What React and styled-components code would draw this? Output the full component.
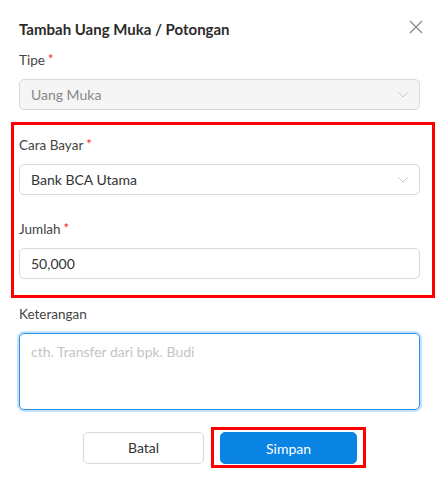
import React from "react";
import styled, { createGlobalStyle } from "styled-components";

const Global = createGlobalStyle`
  html, body { margin: 0; padding: 0; background: #fff; }
  body { font-family: "Lato", "Noto Sans", sans-serif; color: #333; }
  * { box-sizing: border-box; }
`;

const Modal = styled.div`
  position: relative;
  width: 444px;
  padding: 18px 24px 12px 19px;
`;

const Header = styled.div`
  display: flex;
  align-items: center;
  justify-content: space-between;
  height: 22px;
  margin-bottom: 10px;
`;

const Title = styled.h2`
  margin: 0;
  font-size: 15px;
  font-weight: 700;
  line-height: 22px;
  color: #2b2b2b;
`;

const Close = styled.button`
  border: 0;
  background: none;
  padding: 0;
  margin-right: -3px;
  margin-top: -4px;
  width: 14px;
  height: 14px;
  display: flex;
  cursor: pointer;
`;

const Field = styled.div`
  margin-bottom: ${(p) => p.$mb ?? 24}px;
`;

const Label = styled.div`
  height: 20px;
  font-size: 13.5px;
  line-height: 20px;
  color: #444;
  margin-bottom: 9px;
`;

const Req = styled.span`
  color: #f5222d;
  margin-left: 3px;
  font-size: 13px;
  line-height: 0;
  vertical-align: 1px;
`;

const SelectBox = styled.div`
  height: 31px;
  border: 1px solid #d9d9d9;
  border-radius: 5px;
  background: ${(p) => (p.$disabled ? "#f5f5f5" : "#fff")};
  color: ${(p) => (p.$disabled ? "#888" : "#333")};
  display: flex;
  align-items: center;
  justify-content: space-between;
  padding: 0 11px 0 11px;
  font-size: 14px;
`;

const Input = styled.div`
  height: 31px;
  border: 1px solid #d9d9d9;
  border-radius: 5px;
  display: flex;
  align-items: center;
  padding: 0 11px;
  font-size: 14px;
  color: #333;
`;

const TextArea = styled.div`
  height: 77px;
  border: 1px solid #2a8ee3;
  border-radius: 5px;
  box-shadow: 0 0 0 2px rgba(24, 144, 255, 0.25);
  padding: 8px 11px;
  font-size: 14px;
  line-height: 20px;
  color: #c4c4c4;
`;

const Highlight = styled.div`
  border: 3px solid #ff0000;
  margin: 0 -15px ${(p) => p.$mb ?? 0}px -8px;
  padding: 10px 12px 16px 5px;
`;

const Actions = styled.div`
  display: flex;
  justify-content: center;
  align-items: center;
  gap: 7px;
  margin-top: 17px;
  padding-left: 10px;
`;

const Button = styled.button`
  height: 32px;
  width: ${(p) => p.$w}px;
  border-radius: 5px;
  font-family: inherit;
  font-size: 14px;
  border: 1px solid ${(p) => (p.$primary ? "#0984e3" : "#d9d9d9")};
  background: ${(p) => (p.$primary ? "#0984e3" : "#fff")};
  color: ${(p) => (p.$primary ? "#fff" : "#333")};
  cursor: pointer;
`;

const ButtonFrame = styled.div`
  border: 3px solid #ff0000;
  padding: 2px 6px 1px 6px;
  display: flex;
`;

const Chevron = () => (
  <svg width="10" height="6" viewBox="0 0 10 6" fill="none">
    <path d="M0.5 0.5 L5 5 L9.5 0.5" stroke="#c8c8c8" strokeWidth="1" />
  </svg>
);

export default function App() {
  return (
    <>
      <Global />
      <Modal>
        <Header>
          <Title>Tambah Uang Muka / Potongan</Title>
          <Close aria-label="close">
            <svg width="14" height="14" viewBox="0 0 14 14">
              <path d="M1 1 L13 13 M13 1 L1 13" stroke="#8c8c8c" strokeWidth="1.4" />
            </svg>
          </Close>
        </Header>

        <Field $mb={12}>
          <Label>
            Tipe<Req>*</Req>
          </Label>
          <SelectBox $disabled>
            <span>Uang Muka</span>
            <Chevron />
          </SelectBox>
        </Field>

        <Highlight $mb={6}>
          <Field>
            <Label>
              Cara Bayar<Req>*</Req>
            </Label>
            <SelectBox>
              <span>Bank BCA Utama</span>
              <Chevron />
            </SelectBox>
          </Field>
          <Field $mb={0}>
            <Label>
              Jumlah<Req>*</Req>
            </Label>
            <Input>50,000</Input>
          </Field>
        </Highlight>

        <Field $mb={0}>
          <Label>Keterangan</Label>
          <TextArea>cth. Transfer dari bpk. Budi</TextArea>
        </Field>

        <Actions>
          <Button $w={121}>Batal</Button>
          <ButtonFrame>
            <Button $primary $w={137}>
              Simpan
            </Button>
          </ButtonFrame>
        </Actions>
      </Modal>
    </>
  );
}
